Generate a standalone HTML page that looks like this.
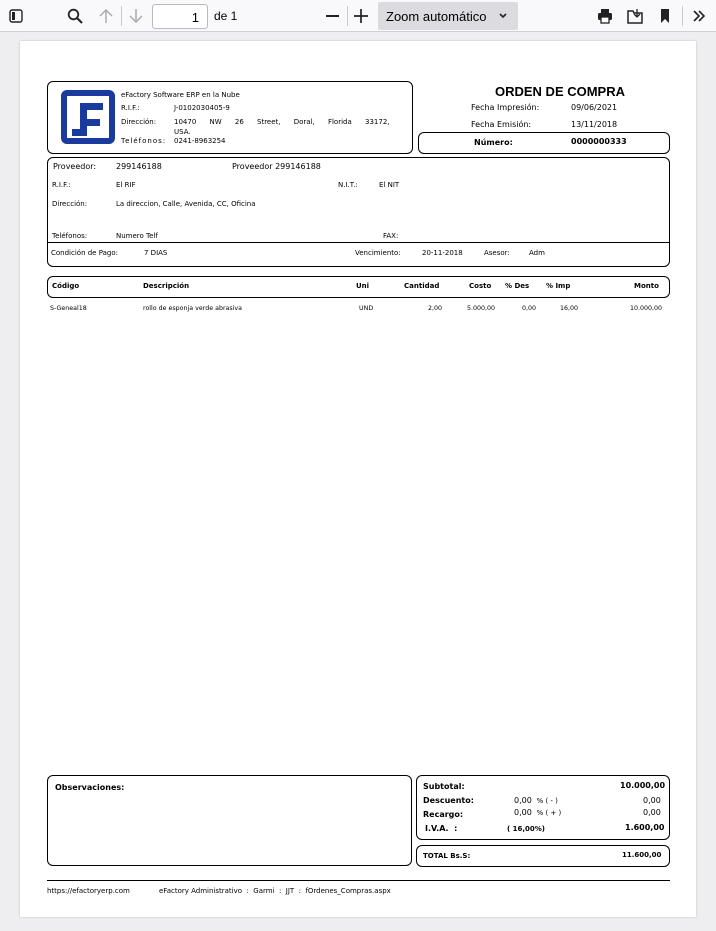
<!DOCTYPE html>
<html><head><meta charset="utf-8"><style>
*{margin:0;padding:0;box-sizing:border-box}
body{width:716px;height:931px;background:#eeeef0;font-family:"DejaVu Sans","Liberation Sans",sans-serif;position:relative;overflow:hidden;color:#000}
.tb{position:absolute;left:0;top:0;width:716px;height:32px;background:#f9f9fb;border-bottom:1px solid #cfcfd8}
.a{position:absolute;white-space:nowrap}
.page{position:absolute;left:20px;top:41px;width:676px;height:876px;background:#fff;box-shadow:0 0 2px rgba(0,0,0,.2)}
.box{position:absolute;border:1.3px solid #000;border-radius:6px}
.s7{font-size:7px}.s8{font-size:8px}.s9{font-size:9px}
.b{font-weight:bold}
</style></head><body>
<div class="tb">
<svg class="a" style="left:9px;top:9px" width="14" height="14" viewBox="0 0 14 14"><rect x="1" y="1" width="12" height="12" rx="2" fill="none" stroke="#222" stroke-width="1.4"/><rect x="3" y="3" width="3" height="8" fill="#222"/></svg>
<svg class="a" style="left:67px;top:8px" width="16" height="16" viewBox="0 0 16 16"><circle cx="6.5" cy="6.5" r="4.8" fill="none" stroke="#222" stroke-width="1.8"/><path d="M10 10l5 5" stroke="#222" stroke-width="2"/></svg>
<svg class="a" style="left:98px;top:8px" width="16" height="16" viewBox="0 0 16 16"><path d="M8 15V2M2 8l6-6 6 6" fill="none" stroke="#aaa" stroke-width="1.5"/></svg>
<div class="a" style="left:121px;top:6px;width:1px;height:20px;background:#ccc"></div>
<svg class="a" style="left:128px;top:8px" width="16" height="16" viewBox="0 0 16 16"><path d="M8 1v13M2 8l6 6 6-6" fill="none" stroke="#aaa" stroke-width="1.5"/></svg>
<div class="a" style="left:152px;top:4px;width:56px;height:25px;border:1px solid #bbb;border-radius:3px;background:#fff;font:13px 'Liberation Sans',sans-serif;text-align:right;padding:5px 8px 0 0">1</div>
<div class="a" style="left:214px;top:9px;font:12px 'Liberation Sans',sans-serif">de 1</div>
<div class="a" style="left:326px;top:15px;width:13px;height:1.6px;background:#222"></div>
<div class="a" style="left:347px;top:6px;width:1px;height:20px;background:#ccc"></div>
<svg class="a" style="left:353px;top:8px" width="16" height="16" viewBox="0 0 16 16"><path d="M8 1v14M1 8h14" stroke="#222" stroke-width="1.7"/></svg>
<div class="a" style="left:378px;top:2px;width:140px;height:28px;background:#dcdce0;border-radius:2px;font:13px 'Liberation Sans',sans-serif;padding:7px 0 0 8px">Zoom automático<svg style="position:absolute;left:121px;top:11px" width="8" height="6" viewBox="0 0 8 6"><path d="M1 1l3 3 3-3" fill="none" stroke="#222" stroke-width="1.6"/></svg></div>
<svg class="a" style="left:597px;top:8px" width="16" height="16" viewBox="0 0 16 16"><rect x="4" y="1" width="8" height="4" fill="#222"/><rect x="1" y="5" width="14" height="7" rx="1.5" fill="#222"/><rect x="4" y="9" width="8" height="6" fill="#fff" stroke="#222" stroke-width="1.3"/></svg>
<svg class="a" style="left:627px;top:8px" width="16" height="16" viewBox="0 0 16 16"><path d="M1 3h5l1 2h8v10H1z" fill="none" stroke="#222" stroke-width="1.5"/><path d="M10 1v8M7 6l3 3 3-3" fill="none" stroke="#222" stroke-width="1.3"/></svg>
<svg class="a" style="left:659px;top:8px" width="12" height="16" viewBox="0 0 12 16"><path d="M2 1h8v14l-4-4-4 4z" fill="#222"/></svg>
<div class="a" style="left:682px;top:6px;width:1px;height:20px;background:#ccc"></div>
<svg class="a" style="left:692px;top:9px" width="14" height="14" viewBox="0 0 14 14"><path d="M2 2l5 5-5 5M7 2l5 5-5 5" fill="none" stroke="#222" stroke-width="1.6"/></svg>
</div>
<div class="page"></div>

<div class="box" style="left:47px;top:81px;width:366px;height:73px"></div>
<svg class="a" style="left:61px;top:90px" width="54" height="54" viewBox="0 0 54 54"><rect x="3" y="3" width="48" height="48" rx="3" fill="none" stroke="#1b3a9e" stroke-width="6"/><path d="M19 13h23v7H26v9h13v7H26v10H11v-7h8z" fill="#1b3a9e"/></svg>
<div class="a s7" style="left:121px;top:91px">eFactory Software ERP en la Nube</div>
<div class="a s7" style="left:121px;top:104px">R.I.F.:</div><div class="a s7" style="left:174px;top:104px">J-0102030405-9</div>
<div class="a s7" style="left:121px;top:118px">Dirección:</div><div class="a s7" style="left:174px;top:118px;width:210px;word-spacing:11px">10470 NW 26 Street, Doral, Florida 33172,</div>
<div class="a s7" style="left:174px;top:128px">USA.</div>
<div class="a s7" style="left:121px;top:137px;letter-spacing:1px">Teléfonos:</div><div class="a s7" style="left:174px;top:137px">0241-8963254</div>

<div class="a b" style="left:495px;top:84px;font-size:13px;font-family:'Liberation Sans',sans-serif">ORDEN DE COMPRA</div>
<div class="a s8" style="left:471px;top:103px">Fecha Impresión:</div><div class="a s8" style="left:571px;top:103px">09/06/2021</div>
<div class="a s8" style="left:471px;top:120px">Fecha Emisión:</div><div class="a s8" style="left:571px;top:120px">13/11/2018</div>
<div class="box" style="left:418px;top:132px;width:252px;height:22px"></div>
<div class="a s8 b" style="left:474px;top:138px">Número:</div><div class="a s8 b" style="left:571px;top:137px">0000000333</div>

<div class="box" style="left:47px;top:157px;width:623px;height:110px"></div>
<div class="a" style="left:47px;top:242px;width:623px;height:1.3px;background:#000"></div>
<div class="a s8" style="left:53px;top:162px">Proveedor:</div><div class="a s8" style="left:116px;top:162px">299146188</div><div class="a s8" style="left:232px;top:162px">Proveedor 299146188</div>
<div class="a s7" style="left:52px;top:181px">R.I.F.:</div><div class="a s7" style="left:116px;top:181px">El RIF</div><div class="a s7" style="left:338px;top:181px">N.I.T.:</div><div class="a s7" style="left:379px;top:181px">El NIT</div>
<div class="a s7" style="left:52px;top:200px">Dirección:</div><div class="a s7" style="left:116px;top:200px">La direccion, Calle, Avenida, CC, Oficina</div>
<div class="a s7" style="left:52px;top:232px">Teléfonos:</div><div class="a s7" style="left:116px;top:232px">Numero Telf</div><div class="a s7" style="left:383px;top:232px">FAX:</div>
<div class="a s7" style="left:51px;top:249px">Condición de Pago:</div><div class="a s7" style="left:144px;top:249px">7 DIAS</div>
<div class="a s7" style="left:355px;top:249px">Vencimiento:</div><div class="a s7" style="left:422px;top:249px">20-11-2018</div><div class="a s7" style="left:484px;top:249px">Asesor:</div><div class="a s7" style="left:529px;top:249px">Adm</div>

<div class="box" style="left:47px;top:276px;width:623px;height:22px"></div>
<div class="a s7 b" style="left:52px;top:282px">Código</div>
<div class="a s7 b" style="left:143px;top:282px">Descripción</div>
<div class="a s7 b" style="left:356px;top:282px">Uni</div>
<div class="a s7 b" style="left:404px;top:282px">Cantidad</div>
<div class="a s7 b" style="left:469px;top:282px">Costo</div>
<div class="a s7 b" style="left:505px;top:282px">% Des</div>
<div class="a s7 b" style="left:546px;top:282px">% Imp</div>
<div class="a s7 b" style="left:634px;top:282px">Monto</div>
<div class="a" style="left:50px;top:305px;font-size:6.3px">S-Geneal18</div>
<div class="a" style="left:143px;top:305px;font-size:6.3px">rollo de esponja verde abrasiva</div>
<div class="a" style="left:359px;top:305px;font-size:6.3px">UND</div>
<div class="a" style="left:428px;top:305px;font-size:6.3px">2,00</div>
<div class="a" style="left:467px;top:305px;font-size:6.3px">5.000,00</div>
<div class="a" style="left:522px;top:305px;font-size:6.3px">0,00</div>
<div class="a" style="left:560px;top:305px;font-size:6.3px">16,00</div>
<div class="a" style="left:630px;top:305px;font-size:6.3px">10.000,00</div>

<div class="box" style="left:47px;top:775px;width:365px;height:91px"></div>
<div class="a s8 b" style="left:55px;top:783px">Observaciones:</div>
<div class="box" style="left:416px;top:775px;width:254px;height:65px"></div>
<div class="a s8 b" style="left:423px;top:782px">Subtotal:</div><div class="a s8 b" style="left:620px;top:781px">10.000,00</div>
<div class="a s8 b" style="left:423px;top:796px">Descuento:</div><div class="a s8" style="left:514px;top:796px">0,00 <span class="s7">&nbsp;% ( - )</span></div><div class="a s8" style="left:643px;top:796px">0,00</div>
<div class="a s8 b" style="left:423px;top:810px">Recargo:</div><div class="a s8" style="left:514px;top:808px">0,00 <span class="s7">&nbsp;% ( + )</span></div><div class="a s8" style="left:643px;top:808px">0,00</div>
<div class="a s8 b" style="left:425px;top:824px">I.V.A. &nbsp;:</div><div class="a s7 b" style="left:507px;top:825px">( 16,00%)</div><div class="a s8 b" style="left:625px;top:823px">1.600,00</div>
<div class="box" style="left:416px;top:845px;width:254px;height:22px"></div>
<div class="a s7 b" style="left:423px;top:852px">TOTAL Bs.S:</div><div class="a s7 b" style="left:622px;top:851px">11.600,00</div>

<div class="a" style="left:47px;top:880px;width:623px;height:1.3px;background:#000"></div>
<div class="a" style="left:47px;top:887px;font-size:7px">https://efactoryerp.com</div>
<div class="a" style="left:159px;top:887px;font-size:7px">eFactory Administrativo &nbsp;: &nbsp;Garmi &nbsp;: &nbsp;JJT &nbsp;: &nbsp;fOrdenes_Compras.aspx</div>
</body></html>
